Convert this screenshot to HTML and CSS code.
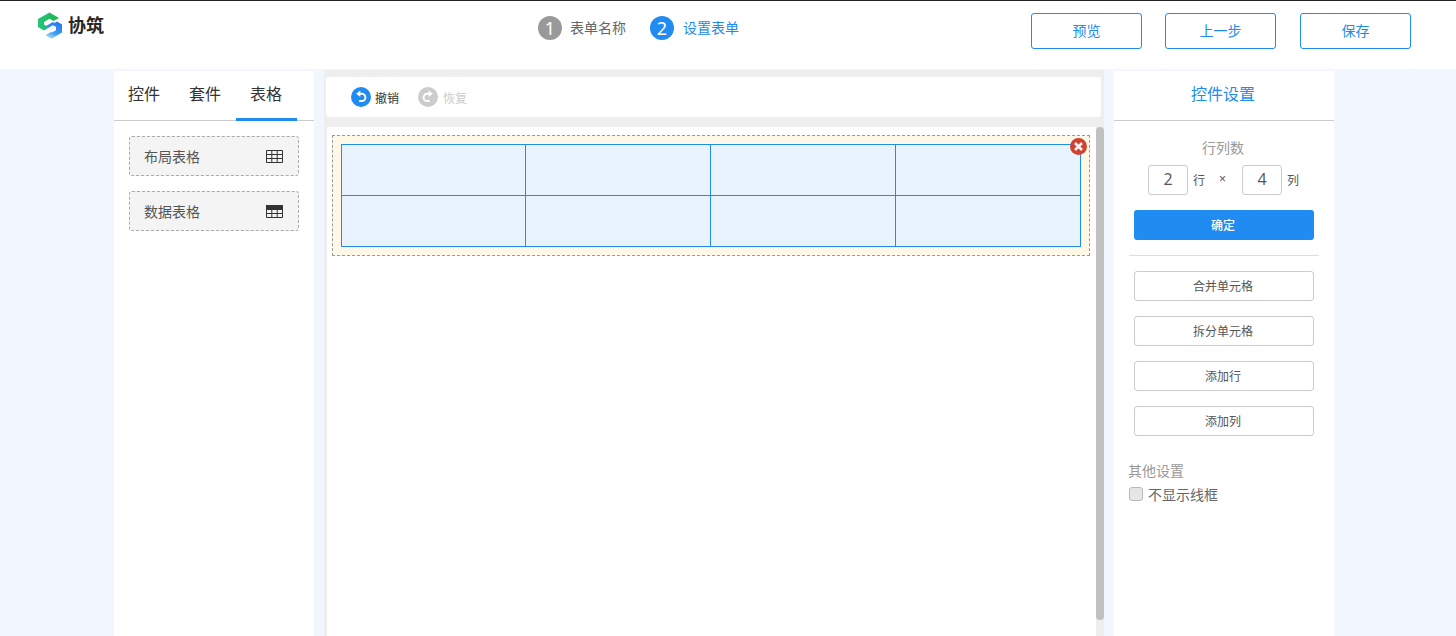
FILE: index.html
```html
<!DOCTYPE html>
<html lang="zh-CN">
<head>
<meta charset="utf-8">
<title>协筑</title>
<link rel="stylesheet" href="styles.css">
</head>
<body>
<header class="topbar">
  <div class="brand">
    <svg class="brand-mark" width="24" height="27" viewBox="0 0 24 27" aria-hidden="true">
      <defs>
        <linearGradient id="g1" x1="0" y1="0" x2="1" y2="0"><stop offset="0" stop-color="#1fc878"/><stop offset="1" stop-color="#23b24f"/></linearGradient>
        <linearGradient id="g2" x1="0.7" y1="0.1" x2="0.3" y2="1"><stop offset="0" stop-color="#2a7bf2"/><stop offset="0.6" stop-color="#3f9cf5"/><stop offset="1" stop-color="#a5dcfb"/></linearGradient>
      </defs>
      <path d="M11.500 .5 21 6 15.500 9 11.500 6.800 6 10V12.500L11 15.500 6 18.500 0 15V7Z" fill="url(#g1)"/>
      <path d="M19 9.500 24 12.500V20.500L13.500 26.800 7.500 23.200 13 20 14 20.500 18 18.200V15L14.800 13.200 10.200 16 7.500 14.300 15 10 16.500 10.900Z" fill="url(#g2)"/>
    </svg>
    <span class="brand-name">协筑</span>
  </div>
  <ol class="steps">
    <li class="step"><span class="step-num">1</span><span class="step-label">表单名称</span></li>
    <li class="step step-active"><span class="step-num">2</span><span class="step-label">设置表单</span></li>
  </ol>
  <div class="actions">
    <button class="btn-outline">预览</button>
    <button class="btn-outline">上一步</button>
    <button class="btn-outline">保存</button>
  </div>
</header>

<main class="workspace">
  <aside class="panel-left">
    <nav class="tabs">
      <span class="tab">控件</span>
      <span class="tab">套件</span>
      <span class="tab tab-active">表格</span>
    </nav>
    <div class="palette">
      <div class="palette-item">
        <span>布局表格</span>
        <svg class="grid-icon" width="17" height="13" viewBox="0 0 17 13" aria-hidden="true">
          <path d="M.5.5h16v12H.5zM.5 4.500h16M.5 8.500h16M5.800.5v12M11.200.5v12" fill="none" stroke="#333"/>
        </svg>
      </div>
      <div class="palette-item">
        <span>数据表格</span>
        <svg class="grid-icon" width="17" height="13" viewBox="0 0 17 13" aria-hidden="true">
          <path d="M0 0h17v5H0z" fill="#333"/>
          <path d="M.5.5h16v12H.5zM.5 8.500h16M5.800 4v9M11.200 4v9" fill="none" stroke="#333"/>
        </svg>
      </div>
    </div>
  </aside>

  <section class="center">
    <div class="toolbar">
      <span class="tool">
        <svg class="tool-icon" width="20" height="20" viewBox="0 0 20 20" aria-hidden="true">
          <circle cx="10" cy="10" r="10" fill="#208bf0"/>
          <path d="M8 6.800H10.800a3.600 3.600 0 0 1 0 7.200H8.200" fill="none" stroke="#fff" stroke-width="2"/>
          <path d="M9.300 3.500 5.200 6.800 9.300 10.100Z" fill="#fff"/>
        </svg>
        <span class="tool-label">撤销</span>
      </span>
      <span class="tool tool-disabled">
        <svg class="tool-icon" width="20" height="20" viewBox="0 0 20 20" aria-hidden="true">
          <circle cx="10" cy="10" r="10" fill="#ccc"/>
          <path d="M12 6.800H9.200a3.600 3.600 0 0 0 0 7.200H11.800" fill="none" stroke="#fff" stroke-width="2"/>
          <path d="M10.700 3.500 14.800 6.800 10.700 10.100Z" fill="#fff"/>
        </svg>
        <span class="tool-label">恢复</span>
      </span>
    </div>
    <div class="canvas-wrap">
      <div class="canvas">
        <div class="table-block">
          <table class="layout-table">
            <colgroup><col class="col-a"><col class="col-b"><col class="col-b"><col class="col-b"></colgroup>
            <tr><td></td><td></td><td></td><td></td></tr>
            <tr><td></td><td></td><td></td><td></td></tr>
          </table>
          <svg class="remove" width="17" height="17" viewBox="0 0 17 17" aria-hidden="true">
            <circle cx="8.500" cy="8.500" r="8.500" fill="#d2412f"/>
            <path d="M5 5l7 7M12 5l-7 7" stroke="#f4f8fc" stroke-width="2.600"/>
          </svg>
        </div>
      </div>
      <div class="scrollbar"><div class="scroll-thumb"></div></div>
    </div>
  </section>

  <aside class="panel-right">
    <h2 class="panel-title">控件设置</h2>
    <div class="settings">
      <div class="field-title">行列数</div>
      <div class="dims">
        <span class="dim-input">2</span><span class="dim-unit">行</span>
        <span class="dim-times">×</span>
        <span class="dim-input">4</span><span class="dim-unit">列</span>
      </div>
      <button class="btn-primary">确定</button>
      <hr class="divider">
      <div class="btn-stack">
        <button class="btn-plain">合并单元格</button>
        <button class="btn-plain">拆分单元格</button>
        <button class="btn-plain">添加行</button>
        <button class="btn-plain">添加列</button>
      </div>
      <div class="other-title">其他设置</div>
      <label class="check"><span class="check-box"></span><span>不显示线框</span></label>
    </div>
  </aside>
</main>
</body>
</html>
```

FILE: styles.css
```css
* { box-sizing: border-box; }
html, body { margin: 0; height: 100%; }
body {
  height: 636px;
  overflow: hidden;
  background: #f2f6fe;
  font-family: "Noto Sans CJK SC", "Noto Sans", sans-serif;
  color: #333;
  display: flex;
  flex-direction: column;
}
button { font-family: inherit; cursor: pointer; }

.topbar {
  height: 69px;
  flex: none;
  background: #fff;
  border-top: 1px solid #222;
  display: flex;
  align-items: flex-start;
  padding-left: 38px;
  padding-right: 45px;
}
.brand { display: flex; align-items: flex-start; margin-top: 10px; }
.brand-mark { display: block; margin-top: 1px; }
.brand-name { margin-left: 6px; font-size: 18px; font-weight: 700; color: #2b2523; line-height: 26px; }

.steps { list-style: none; display: flex; gap: 24px; margin: 15px 0 0 434px; padding: 0; }
.step { display: flex; align-items: center; color: #666; height: 24px; }
.step-num {
  width: 24px; height: 24px; border-radius: 50%;
  background: #999; color: #fff;
  display: flex; align-items: center; justify-content: center;
  font-family: "Noto Sans", sans-serif; font-size: 18px; line-height: 24px;
  margin-right: 8px;
}
.step-label { font-size: 14px; line-height: 22px; padding-bottom: 2px; }
.step-active { color: #208bf0; }
.step-active .step-num { background: #208bf0; }
.step-active .step-label { margin-left: 1px; }

.actions { margin-left: auto; margin-top: 12px; display: flex; gap: 23px; }
.actions .btn-outline:last-child { margin-left: 1px; }
.btn-outline {
  width: 111px; height: 36px;
  background: #fff; color: #208bf0;
  border: 1px solid #208bf0; border-radius: 3px;
  font-size: 14px; padding: 0 0 2px;
}

.workspace { flex: 1; min-height: 0; display: flex; padding-left: 114px; }

.panel-left {
  width: 200px; flex: none;
  margin-top: 2px;
  background: #fff;
}
.tabs { display: flex; height: 50px; border-bottom: 1px solid #ccc; }
.tab {
  width: 61px; height: 50px;
  padding-right: 1px;
  text-align: center; font-size: 16px; line-height: 44px; color: #333;
}
.tab-active { border-bottom: 3px solid #208bf0; }
.palette { padding: 15px 15px 0; display: flex; flex-direction: column; gap: 15px; }
.palette-item {
  height: 40px;
  background: #f4f4f4;
  border: 1px dashed #aaa;
  border-radius: 3px;
  display: flex; align-items: center; justify-content: space-between;
  padding: 0 15px 0 14px;
  font-size: 14px; color: #555;
}
.grid-icon { display: block; }

.center {
  width: 780px; flex: none;
  margin-left: 10px;
  margin-top: 1px;
  background: #eee;
  display: flex; flex-direction: column;
  padding-top: 7px;
}
.toolbar {
  width: 775px; height: 40px;
  margin-left: 2px;
  background: #fff;
  border-radius: 3px;
  display: flex; align-items: center;
  padding-left: 25px;
  gap: 19px;
}
.tool { display: flex; align-items: center; font-size: 12px; color: #333; }
.tool-icon { display: block; }
.tool-label { margin-left: 4px; line-height: 20px; padding-top: 1px; }
.tool-disabled { color: #ccc; }
.tool-disabled .tool-label { margin-left: 5px; }

.canvas-wrap { flex: 1; min-height: 0; margin-top: 10px; margin-left: 3px; display: flex; }
.canvas { width: 769px; flex: none; background: #fff; padding: 8px 6px 0 5px; }
.table-block {
  position: relative;
  height: 121px;
  background: #fff8e6;
  border: 1px dashed #999;
  padding: 8px;
}
.layout-table {
  width: 740px; height: 103px;
  border-collapse: collapse;
  table-layout: fixed;
}
.col-a { width: 184px; }
.col-b { width: 185px; }
.layout-table td { border: 1px solid #208bf0; background: #e8f3fe; padding: 0; }
.remove { position: absolute; top: 2px; right: 2px; display: block; }

.scrollbar { width: 8px; flex: none; }
.scroll-thumb { height: 493px; background: #c1c1c1; border-radius: 4px; }

.panel-right {
  width: 220px; flex: none;
  margin-left: 10px; margin-top: 2px;
  background: #fff;
}
.panel-title {
  margin: 0; height: 50px;
  padding-right: 2px;
  border-bottom: 1px solid #ccc;
  text-align: center;
  font-size: 16px; font-weight: 400; line-height: 44px;
  color: #208bf0;
}
.settings { padding: 16px 15px 0; }
.field-title { text-align: center; padding-right: 2px; font-size: 14px; line-height: 20px; color: #999; }
.dims { display: flex; align-items: center; margin-top: 8px; padding-left: 19px; font-size: 12px; color: #555; }
.dim-input {
  width: 40px; height: 30px;
  border: 1px solid #ccc; border-radius: 3px;
  text-align: center; font-size: 16px; line-height: 27px;
  font-family: "Open Sans", sans-serif;
  color: #555;
}
.dim-unit { margin-left: 5px; line-height: 16px; }
.dim-times { margin: 0 16px 0 14px; width: 7px; font-family: "Liberation Sans", sans-serif; font-size: 12px; line-height: 16px; padding-bottom: 2px; }
.btn-primary {
  display: block;
  width: 180px; height: 30px;
  margin: 15px 0 0 5px;
  background: #208bf0; color: #fff;
  border: 0; border-radius: 3px;
  font-size: 12px; font-weight: 500; padding: 0 2px 2px 0;
}
.divider { margin: 15px 0 0; border: 0; border-top: 1px solid #ddd; }
.btn-stack { display: flex; flex-direction: column; gap: 15px; margin: 15px 0 0 5px; }
.btn-plain {
  width: 180px; height: 30px;
  background: #fff; color: #555;
  border: 1px solid #ccc; border-radius: 3px;
  font-size: 12px; padding: 0 2px 2px 0;
}
.other-title { margin-top: 24px; margin-left: -1px; font-size: 14px; line-height: 20px; color: #999; }
.check { display: flex; align-items: center; font-size: 14px; line-height: 20px; color: #666; margin-top: 4px; }
.check-box {
  width: 14px; height: 14px; margin-right: 5px;
  background: #e6e6e6; border: 1px solid #bbb; border-radius: 3px;
}
```
